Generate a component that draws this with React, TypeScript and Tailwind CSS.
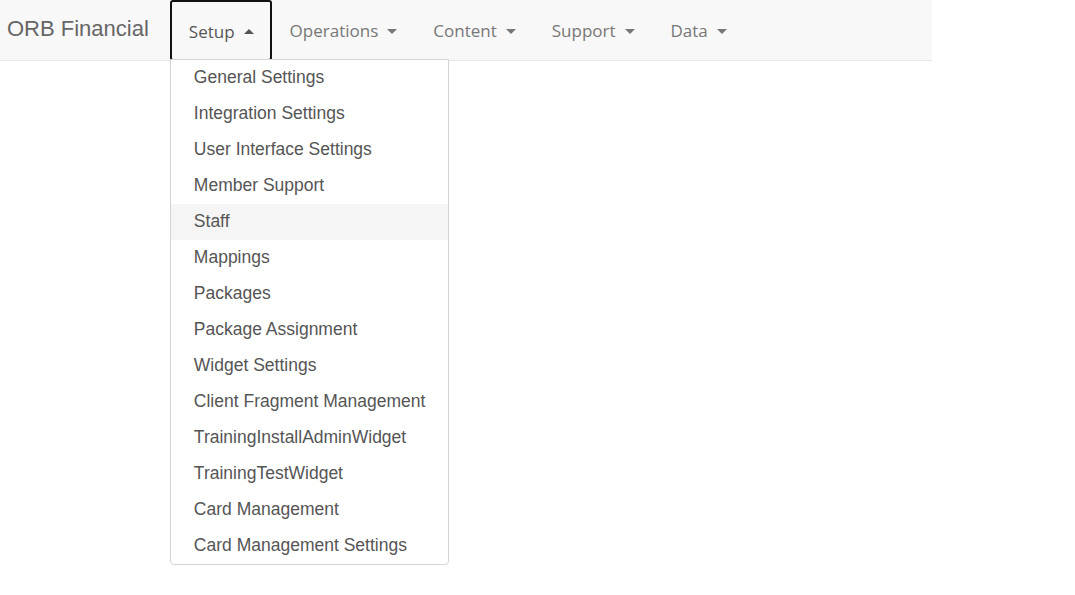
import React from "react";

const items = [
  "General Settings",
  "Integration Settings",
  "User Interface Settings",
  "Member Support",
  "Staff",
  "Mappings",
  "Packages",
  "Package Assignment",
  "Widget Settings",
  "Client Fragment Management",
  "TrainingInstallAdminWidget",
  "TrainingTestWidget",
  "Card Management",
  "Card Management Settings",
];

function Caret({ up }: { up?: boolean }) {
  return (
    <svg width="10" height="5" viewBox="0 0 10 5" className="ml-[9px] fill-current">
      {up ? <polygon points="0,5 10,5 5,0" /> : <polygon points="0,0 10,0 5,5" />}
    </svg>
  );
}

export default function App() {
  const nav = ["Operations", "Content", "Support", "Data"];
  return (
    <div className="w-[1075px] h-[595px] bg-white relative" style={{ fontFamily: "'Liberation Sans', Arial, sans-serif" }}>
      <div className="w-[932px] h-[61px] bg-[#f8f8f8] border-b border-[#e7e7e7] flex items-stretch">
        <div className="pl-[7px] pr-[21px] flex items-center text-[22px] text-[#666] pb-[4px]">ORB Financial</div>
        <div className="relative">
          <div className="h-[61px] border-2 border-[#111] rounded-[3px] pl-[17px] pr-[16px] flex items-center text-[#555] text-[17px] bg-[#f8f8f8] pt-[2px]" style={{ fontFamily: "'Open Sans', sans-serif" }}>
            Setup
            <Caret up />
          </div>
          <div className="absolute left-0 top-[59px] w-[279px] bg-white border border-[#d4d4d4] rounded-b-[4px] z-10">
            {items.map((t) => (
              <div key={t} className={`h-[36px] flex items-center pl-[23px] pb-[1px] text-[17.5px] text-[#555] ${t === "Staff" ? "bg-[#f5f5f5]" : ""}`}>
                {t}
              </div>
            ))}
          </div>
        </div>
        {nav.map((n) => (
          <div key={n} className="px-[18px] flex items-center text-[17px] text-[#777] pt-[2px]" style={{ fontFamily: "'Open Sans', sans-serif" }}>
            {n}
            <Caret />
          </div>
        ))}
      </div>
    </div>
  );
}
